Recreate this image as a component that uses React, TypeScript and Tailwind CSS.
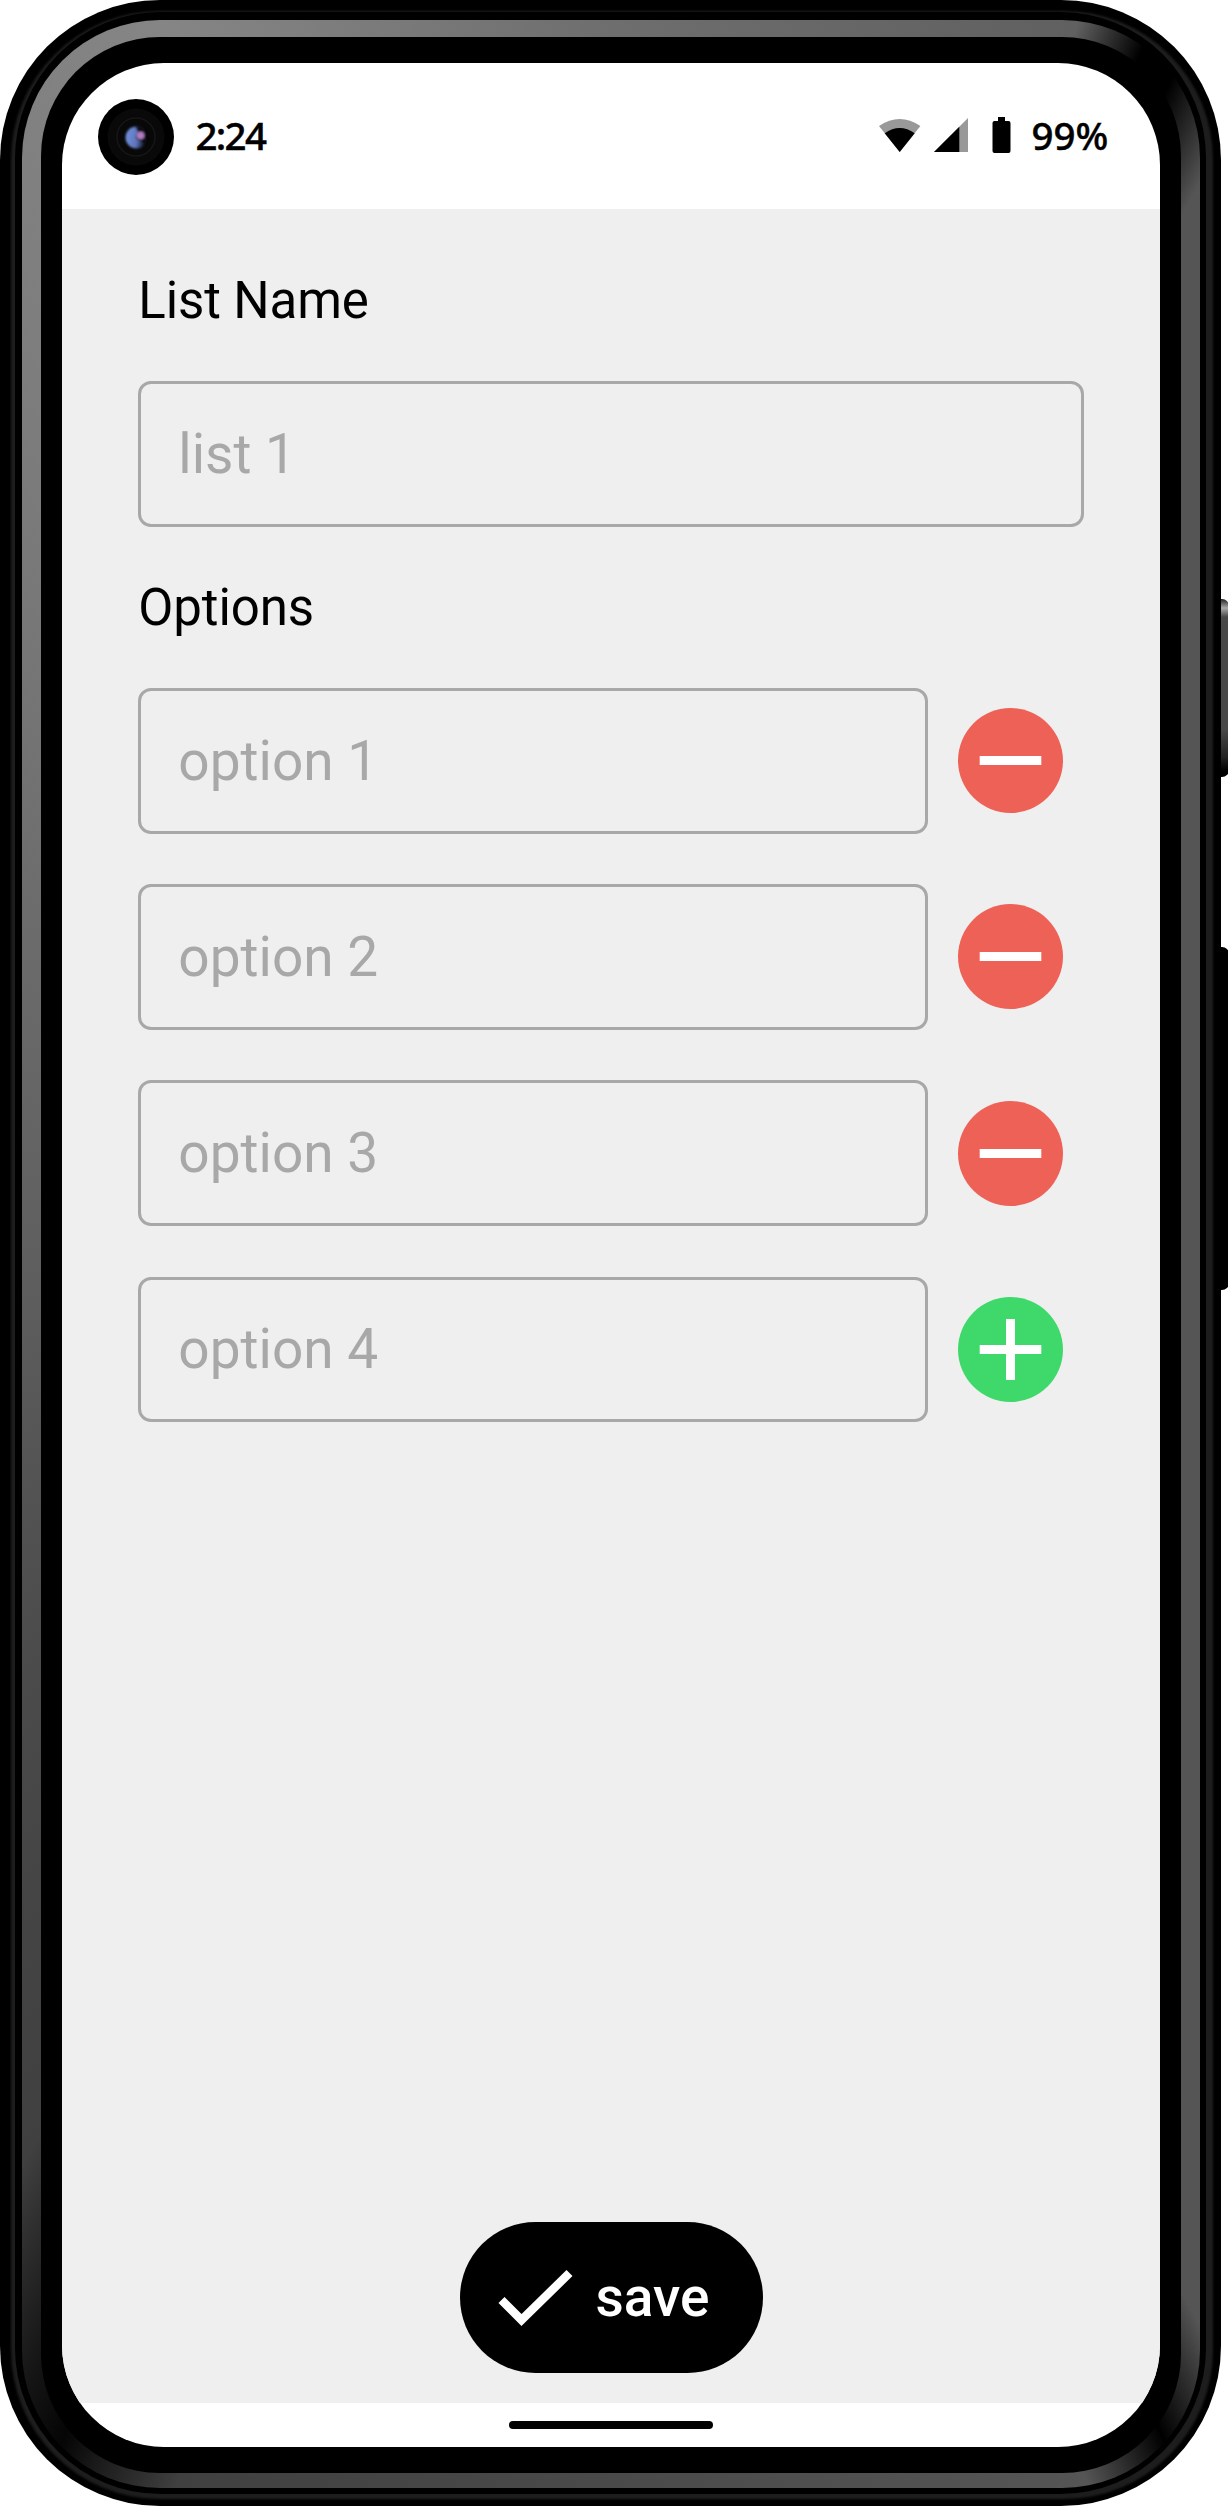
import React from "react";

function PhoneFrame({ children }: { children: React.ReactNode }) {
  return (
    <div className="relative z-10 h-[2506px] w-[1221px] rounded-[160px] bg-black p-[11px] pb-[7px] pr-[8px]">
      <div className="h-full w-full rounded-[149px] bg-[#1d1d1d] p-[4px] blur-[1px]" />
      <div className="absolute inset-0 px-[15px] pt-[12px] pb-[12px]">
        <div className="h-full w-full rounded-[146px] bg-black pl-[7px] pr-[6px] pt-[8px] pb-[6px]">
          <div className="h-full w-full rounded-[138px] bg-[conic-gradient(#6e6e6e_0deg,#606060_20.8deg,#000_23.8deg,#000_25.5deg,#555_28.8deg,#555_151.2deg,#000_155deg,#555_158.8deg,#404040_199.4deg,#1c1c1c_202.9deg,#050505_204.8deg,#151515_207.3deg,#404040_212.9deg,#4b4b4b_234.5deg,#5c5c5c_263deg,#6c6c6c_301deg,#7c7c7c_325deg,#858585_340deg,#6e6e6e_360deg)] px-[19px] pt-[17px] pb-[15px]">
            <div className="h-full w-full rounded-[119px] bg-black pl-[21px] pr-[21px] pt-[26px] pb-[26px]">
              <div className="flex h-full w-full flex-col overflow-hidden rounded-[102px] bg-white font-['Roboto',sans-serif]">
                {children}
              </div>
            </div>
          </div>
        </div>
      </div>
    </div>
  );
}

function Camera() {
  return (
    <svg className="h-[76px] w-[76px]" viewBox="0 0 76 76">
      <defs>
        <linearGradient id="lens" x1="0" y1="0.3" x2="1" y2="0.5">
          <stop offset="0" stopColor="#6f93dd" />
          <stop offset="0.55" stopColor="#5f74bb" />
          <stop offset="0.95" stopColor="#0a0a12" />
        </linearGradient>
        <filter id="soft"><feGaussianBlur stdDeviation="1" /></filter>
      </defs>
      <circle cx="38" cy="38" r="38" fill="#000" />
      <circle cx="38" cy="38" r="28.5" fill="#090909" />
      <circle cx="38" cy="38" r="19" fill="#080808" stroke="#161616" strokeWidth="1.5" />
      <g filter="url(#soft)">
        <circle cx="38.5" cy="38.5" r="11" fill="url(#lens)" />
        <path d="M37 27.500Q49 27 50 38Q50 44 46 46Q44 41 40 41Q36 38 40 33Z" fill="#08080e" />
        <circle cx="42.500" cy="36.500" r="3.800" fill="#b07cc0" />
      </g>
    </svg>
  );
}

function StatusBar() {
  return (
    <header className="flex h-[146px] shrink-0 items-start pl-[36px] pr-[50px] pt-[35.500px] font-['Noto_Sans',sans-serif] text-[38.5px] font-medium text-black">
      <Camera />
      <span className="ml-[21.500px] mt-[11.500px] leading-[51px] tracking-[-1.7px] [-webkit-text-stroke:0.4px_#000]">2:24</span>
      <div className="ml-auto flex items-start">
        <svg className="mt-[20.500px] h-[33px] w-[42px]" viewBox="0 0 42 33">
          <path d="M0 7Q20.700 -7 41.400 7L20.700 33Z" fill="#999" />
          <path d="M5.700 14.300Q20.700 3.700 35.700 14.300L20.700 33Z" fill="#000" />
        </svg>
        <svg className="ml-[13px] mt-[19.500px] h-[34px] w-[34px]" viewBox="0 0 34 34">
          <path d="M34 0V34H0Z" fill="#999" />
          <path d="M25.300 8.700V34H0Z" fill="#000" />
        </svg>
        <svg className="ml-[24px] mt-[17.500px] h-[37px] w-[19px]" viewBox="0 0 19 37">
          <path d="M6 1h7v4h3.500q2 0 2 2v28q0 2-2 2h-14q-2 0-2-2v-28q0-2 2-2H6Z" fill="#000" />
        </svg>
        <span className="ml-[20.500px] mt-[11.500px] w-[78.500px] leading-[51px] whitespace-nowrap [-webkit-text-stroke:0.4px_#000]">99%</span>
      </div>
    </header>
  );
}

function Field({ placeholder, className = "" }: { placeholder: string; className?: string }) {
  return (
    <input
      className={`block h-[145.500px] rounded-[13px] border-3 border-[#a8a8a8] bg-transparent px-[37px] text-[55px] text-black outline-none placeholder:text-[#a8a8a8] placeholder:opacity-100 ${className}`}
      placeholder={placeholder}
    />
  );
}

function OptionRow({ label, action }: { label: string; action: "add" | "remove" }) {
  const add = action === "add";
  return (
    <div className="flex items-center">
      <Field placeholder={label} className="w-[790px]" />
      <button
        aria-label={`${action} ${label}`}
        className={`ml-[30px] h-[105px] w-[105px] rounded-full ${add ? "bg-[#3ed96a]" : "bg-[#ee6157]"}`}
      >
        <svg className="h-full w-full" viewBox="0 0 105 105" stroke="#fff" strokeWidth="9">
          <path d={add ? "M21.700 52.500H83.300M52.500 22V83" : "M21.700 52.500H83.300"} />
        </svg>
      </button>
    </div>
  );
}

const options = ["option 1", "option 2", "option 3", "option 4"];

export default function App() {
  return (
    <div className="relative h-[2506px] w-[1228px] overflow-hidden bg-white">
      <PhoneFrame>
        <StatusBar />
        <main className="flex min-h-0 flex-1 flex-col bg-[#efefef] pl-[76.300px] pr-[75.700px] pt-[62px] pb-[30px]">
          <h2 className="text-[51px] leading-[60px] tracking-[-0.1px]">List Name</h2>
          <Field placeholder="list 1" className="mt-[50px] w-[945.500px]" />
          <h2 className="mt-[51.500px] text-[51px] leading-[60px] tracking-[-0.1px]">Options</h2>
          <div className="mt-[50px] flex flex-col gap-[50.700px]">
            {options.map((o, i) => (
              <OptionRow key={o} label={o} action={i === options.length - 1 ? "add" : "remove"} />
            ))}
          </div>
          <button className="mx-auto mt-auto flex h-[151px] w-[303.500px] items-center rounded-full bg-black pl-[38.500px] text-[55px] font-medium text-white">
            <svg className="h-[58px] w-[75px]" viewBox="0 0 75 58" fill="none" stroke="#fff" strokeWidth="8.500">
              <path d="M3.500 31L23.500 51L71.500 4" />
            </svg>
            <span className="ml-[22.500px]">save</span>
          </button>
        </main>
        <footer className="flex h-[44px] shrink-0 justify-center pt-[18px]">
          <div className="h-[8px] w-[204px] rounded-full bg-black" />
        </footer>
      </PhoneFrame>
      <div className="absolute left-[1214px] top-[599px] h-[178px] w-[15px] rounded-[7px] bg-[linear-gradient(#222_0px,#aaa_9px,#484848_18px,#484848_130px,#222_158px,#000_172px)]" />
      <div className="absolute left-[1214px] top-[947px] h-[343px] w-[15px] rounded-[7px] bg-black" />
    </div>
  );
}
